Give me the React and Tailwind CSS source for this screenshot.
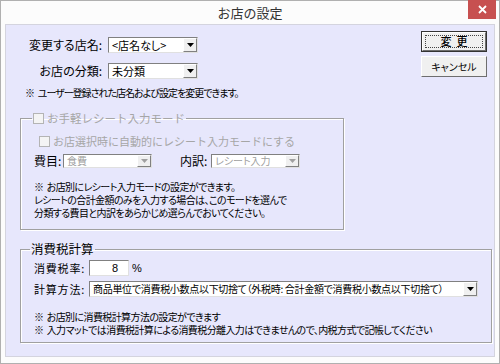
import React from 'react';

const jp = "font-['Noto_Sans_CJK_JP','Noto_Sans',sans-serif]";
const palt = "[font-feature-settings:'palt']";
const note = `text-[10px] leading-[13px] tracking-[-0.6px] whitespace-nowrap ${palt}`;

const Arrow = ({ disabled }) => (
  <span className="w-[14px] h-full shrink-0 flex items-center justify-center bg-[#f0f0f0] border-l border-t border-l-white border-t-white border-r border-b border-r-[#808080] border-b-[#808080]">
    <svg width="7" height="4" viewBox="0 0 7 4">
      <path d="M0 0h7L3.5 4z" fill={disabled ? '#a0a0a0' : '#000'} />
    </svg>
  </span>
);

const Select = ({ w, h, text, disabled, size = 'text-[11px]' }) => (
  <div
    className={`flex items-stretch shrink-0 bg-white border border-t-[#808080] border-l-[#808080] border-r-[#e0e0e0] border-b-[#e0e0e0] ${w} ${h}`}
  >
    <span className={`flex-1 px-[3px] flex items-center leading-none whitespace-nowrap ${palt} ${size} ${disabled ? 'text-[#a0a0a0]' : 'text-black'}`}>
      {text}
    </span>
    <Arrow disabled={disabled} />
  </div>
);

const Check = () => (
  <span className="w-[11px] h-[11px] border border-[#b4b4b4] bg-[#f4f4f4] shrink-0" />
);

const Button = ({ children, def }) => (
  <div className={`w-[66px] h-[21px] ${def ? 'border border-[#333]' : ''}`}>
    <div className="w-full h-full flex items-center justify-center bg-[#f0f0f0] border-t border-l border-t-white border-l-white border-r border-b border-r-[#6e6e6e] border-b-[#6e6e6e]">
      <span
        className={`${def ? 'w-[58px] h-[13px] border border-dotted border-[#444] font-medium text-[11px]' : 'text-[10px]'} flex items-center justify-center leading-none ${palt}`}
      >
        {children}
      </span>
    </div>
  </div>
);

export default function App() {
  return (
    <div className={`w-[500px] h-[364px] bg-[#fcfcfc] border border-[#b0b0b0] flex flex-col ${jp} text-black`}>
      <div className="h-[23px] shrink-0 relative flex items-center justify-center text-[13px] text-[#333]">
        お店の設定
        <div className="absolute right-[3px] top-[-1px] w-[28px] h-[19px] bg-[#c75050] flex items-center justify-center">
          <svg width="9" height="9" viewBox="0 0 9 9">
            <path d="M1 1l7 7M8 1l-7 7" stroke="#fff" strokeWidth="1.8" />
          </svg>
        </div>
      </div>

      <div className="mx-[4px] mb-[6px] flex-1 bg-[#e7e7fc] border border-[#d4d4de] flex flex-col">
        {/* top section */}
        <div className="h-[85px] shrink-0 flex justify-between">
          <div className="flex flex-col pt-[12px]">
            <div className="flex items-center gap-[6px]">
              <span className={`w-[96px] text-right text-[12px] leading-none whitespace-nowrap ${palt}`}>変更する店名:</span>
              <Select w="w-[90px]" h="h-[16px]" text="<店名なし>" />
            </div>
            <div className="flex items-center gap-[6px] mt-[10px]">
              <span className={`w-[96px] text-right text-[12px] leading-none whitespace-nowrap ${palt}`}>お店の分類:</span>
              <Select w="w-[90px]" h="h-[16px]" text="未分類" />
            </div>
            <div className={`mt-[7px] pl-[19px] text-[10px] leading-[13px] tracking-[-1px] whitespace-nowrap ${palt}`}>
              ※&nbsp;&nbsp;&nbsp;ユーザー登録された店名および設定を変更できます。
            </div>
          </div>
          <div className="flex flex-col gap-[4px] pt-[6px] pr-[7px]">
            <Button def>変&nbsp;&nbsp;更</Button>
            <Button>キャンセル</Button>
          </div>
        </div>

        {/* group 1 */}
        <fieldset className="ml-[14px] w-[324px] h-[120px] shrink-0 border border-[#a0a0a0] shadow-[inset_1px_1px_0_#fff,1px_1px_0_#fff] px-[13px]">
          <legend className="-ml-[2px] flex items-center gap-[3px] px-[1px] text-[11.5px] leading-[16px] text-[#a6a6a6] whitespace-nowrap">
            <Check />
            <span>お手軽レシート入力モード</span>
          </legend>
          <div className="flex items-center gap-[3px] mt-[7px] pl-[5px] text-[11px] leading-[16px] text-[#a6a6a6] whitespace-nowrap">
            <Check />
            <span>お店選択時に自動的にレシート入力モードにする</span>
          </div>
          <div className="flex items-center mt-[5px] text-[12px] leading-none whitespace-nowrap">
            <span className={`${palt} w-[29px]`}>費目:</span>
            <Select w="w-[89px]" h="h-[14px]" text="食費" disabled size="text-[10px]" />
            <span className={`${palt} ml-[28px] w-[31px]`}>内訳:</span>
            <Select w="w-[89px]" h="h-[14px]" text="レシート入力" disabled size="text-[10px]" />
          </div>
          <div className={`mt-[12px] ${note}`}>
            <div>※&nbsp;&nbsp;お店別にレシート入力モードの設定ができます。</div>
            <div>レシートの合計金額のみを入力する場合は、このモードを選んで</div>
            <div>分類する費目と内訳をあらかじめ選らんでおいてください。</div>
          </div>
        </fieldset>

        {/* group 2 */}
        <fieldset className="ml-[14px] mt-[10px] w-[465px] h-[103px] shrink-0 border border-[#a0a0a0] shadow-[inset_1px_1px_0_#fff,1px_1px_0_#fff] px-[13px]">
          <legend className="-ml-[4px] px-[1px] text-[12.5px] leading-[18px]">消費税計算</legend>
          <div className="flex items-center mt-[2px] leading-none whitespace-nowrap">
            <span className={`${palt} w-[55px] text-[11px] tracking-[0.8px]`}>消費税率:</span>
            <div className="w-[40px] h-[16px] bg-white border border-t-[#808080] border-l-[#808080] border-r-[#e0e0e0] border-b-[#e0e0e0] flex items-center justify-end pr-[10px] text-[11px] font-['Liberation_Sans',sans-serif]">
              8
            </div>
            <span className="ml-[3px] text-[11px] font-['Liberation_Sans',sans-serif]">%</span>
          </div>
          <div className="flex items-center mt-[5px] leading-none whitespace-nowrap">
            <span className={`${palt} w-[55px] text-[11px] tracking-[0.8px]`}>計算方法:</span>
            <Select
              w="w-[389px]"
              h="h-[16px]"
              text="商品単位で消費税小数点以下切捨て（外税時: 合計金額で消費税小数点以下切捨て）"
              size="text-[10px] tracking-[-0.3px]"
            />
          </div>
          <div className={`mt-[13px] ${note}`}>
            <div>※&nbsp;&nbsp;お店別に消費税計算方法の設定ができます</div>
            <div>※&nbsp;&nbsp;入力マットでは消費税計算による消費税分離入力はできませんので、内税方式で記帳してください</div>
          </div>
        </fieldset>
      </div>
    </div>
  );
}
